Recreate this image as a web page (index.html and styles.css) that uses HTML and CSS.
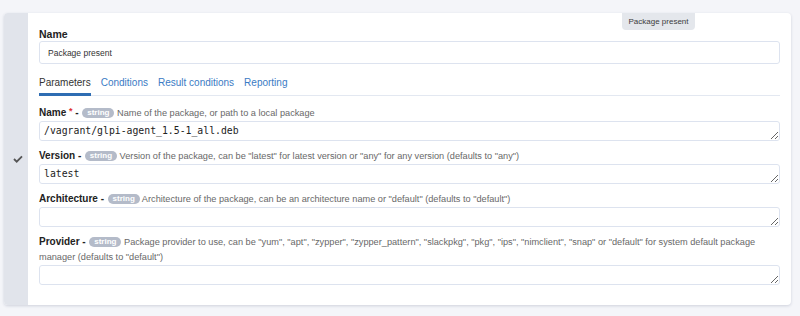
FILE: index.html
```html
<!DOCTYPE html>
<html lang="en">
<head>
    <meta charset="UTF-8">
    <title>Method editor</title>
    <link rel="stylesheet" href="styles.css">
</head>
<body>

    <!-- Method call block -->
    <div class="method">
        <div class="method-side">
            <svg class="check" width="10" height="8" viewBox="0 0 10 8">
                <path d="M1 4 L3.7 6.7 L9 1.3" fill="none" stroke="#555" stroke-width="1.8"/>
            </svg>
        </div>

        <div class="method-body">
            <div class="method-badge">Package present</div>

            <label class="top-label">Name</label>
            <input class="name-input" type="text" value="Package present">

            <ul class="tabs">
                <li class="tab active">Parameters</li>
                <li class="tab">Conditions</li>
                <li class="tab">Result conditions</li>
                <li class="tab">Reporting</li>
            </ul>

            <div class="params">
                <div class="param">
                    <div class="param-label"><b>Name <span class="req">*</span> -</b> <span class="type">string</span> Name of the package, or path to a local package</div>
                    <textarea class="param-value" rows="1">/vagrant/glpi-agent_1.5-1_all.deb</textarea>
                </div>
                <div class="param">
                    <div class="param-label"><b>Version -</b> <span class="type">string</span> Version of the package, can be "latest" for latest version or "any" for any version (defaults to "any")</div>
                    <textarea class="param-value" rows="1">latest</textarea>
                </div>
                <div class="param">
                    <div class="param-label"><b>Architecture -</b> <span class="type">string</span> Architecture of the package, can be an architecture name or "default" (defaults to "default")</div>
                    <textarea class="param-value" rows="1"></textarea>
                </div>
                <div class="param">
                    <div class="param-label"><b>Provider -</b> <span class="type">string</span> Package provider to use, can be "yum", "apt", "zypper", "zypper_pattern", "slackpkg", "pkg", "ips", "nimclient", "snap" or "default" for system default package manager (defaults to "default")</div>
                    <textarea class="param-value" rows="1"></textarea>
                </div>
            </div>
        </div>
    </div>

</body>
</html>
```

FILE: styles.css
```css
body {
    margin: 0;
    padding: 13px 9px 10px 4px;
    font-family: "Liberation Sans", Arial, sans-serif;
    background-color: #f4f5f9;
    color: #222;
}
.method {
    display: flex;
    background-color: white;
    border-radius: 4px;
    box-shadow: 0 1px 3px rgba(40, 50, 90, 0.18);
    overflow: hidden;
}
.method-side {
    width: 24px;
    flex: none;
    background-color: #e1e4eb;
    display: flex;
    align-items: center;
    justify-content: center;
}
.check {
    margin-left: 3px;
}
.method-body {
    flex: 1;
    position: relative;
    padding: 15px 11px 20px 11px;
}
.method-badge {
    position: absolute;
    top: 0;
    right: 96px;
    width: 73px;
    height: 17px;
    line-height: 17px;
    text-align: center;
    font-size: 8px;
    color: #3c3c3c;
    background-color: #e4e7ec;
    border-radius: 0 0 4px 4px;
}
.top-label {
    display: block;
    font-size: 10.5px;
    font-weight: bold;
    line-height: 13px;
}
.name-input {
    display: block;
    box-sizing: border-box;
    width: 100%;
    height: 23px;
    margin: 0;
    padding: 0 8px;
    border: 1px solid #dde3ef;
    border-radius: 3px;
    font-family: "Liberation Sans", Arial, sans-serif;
    font-size: 8.5px;
    color: #333;
}
.tabs {
    display: flex;
    gap: 10px;
    list-style: none;
    margin: 12px 0 0 0;
    padding: 0;
    border-bottom: 1px solid #e3e8f1;
}
.tab {
    font-size: 10px;
    line-height: 14px;
    padding-bottom: 3px;
    border-bottom: 3px solid transparent;
    margin-bottom: -1px;
    color: #3a7bc4;
}
.tab.active {
    color: #333;
    border-bottom-color: #2f6db3;
}
.params {
    padding-top: 10px;
}
.param {
    margin-bottom: 8px;
}
.param:last-child {
    margin-bottom: 0;
}
.param-label {
    font-size: 9.2px;
    line-height: 15px;
    color: #686868;
}
.param-label b {
    font-size: 10px;
    line-height: 10px;
    color: #222;
    margin-right: 1px;
}
.req {
    color: #e03030;
    font-size: 9px;
    line-height: 9px;
    position: relative;
    top: -2px;
}
.type {
    display: inline-block;
    vertical-align: top;
    margin-top: 2px;
    background-color: #b4bbc9;
    color: white;
    font-weight: bold;
    font-size: 8px;
    line-height: 10px;
    padding: 0 5px;
    border-radius: 6px;
}
.param-value {
    display: block;
    box-sizing: border-box;
    width: 100%;
    height: 20px;
    margin: 0;
    padding: 2px 4px 0 4px;
    border: 1px solid #dde3ef;
    border-radius: 3px;
    font-family: "DejaVu Sans Mono", monospace;
    font-size: 9.8px;
    line-height: 14px;
    color: #222;
}
```
